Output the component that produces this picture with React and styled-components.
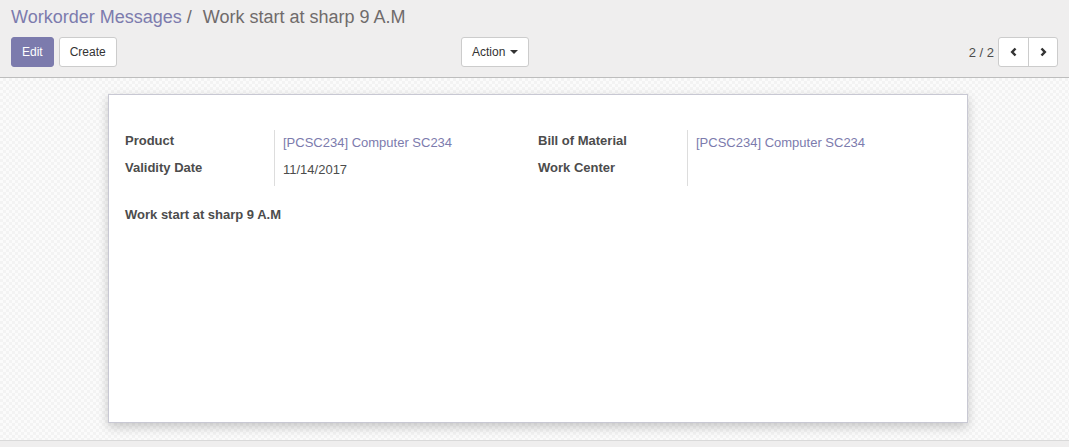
import React from "react";
import styled, { createGlobalStyle } from "styled-components";

const Global = createGlobalStyle`
  html, body { margin: 0; padding: 0; }
  body {
    font-family: "Liberation Sans", Arial, sans-serif;
    font-size: 13px;
    color: #4c4c4c;
    background: #fff;
  }
`;

const Page = styled.div`
  width: 1069px;
  height: 447px;
  display: flex;
  flex-direction: column;
  overflow: hidden;
`;

const ControlPanel = styled.div`
  background: #efeeee;
  border-bottom: 1px solid #bdbdbd;
  padding: 7px 11px 10px 11px;
  height: 60px;
  display: flex;
  flex-direction: column;
  gap: 9px;
`;

const Breadcrumb = styled.div`
  font-size: 18px;
  line-height: 21px;
  display: flex;
  align-items: center;
  white-space: nowrap;
`;

const Crumb = styled.span`
  color: #7c7bad;
`;

const Sep = styled.span`
  color: #6f6b6b;
  padding: 0 11px 0 5px;
`;

const Active = styled.span`
  color: #6f6b6b;
`;

const ButtonRow = styled.div`
  display: grid;
  grid-template-columns: 450px auto 1fr;
  align-items: center;
`;

const Left = styled.div`
  display: flex;
  gap: 5px;
`;

const Right = styled.div`
  display: flex;
  justify-content: flex-end;
  align-items: center;
  gap: 4px;
`;

const Btn = styled.button`
  height: 30px;
  padding: 0 10px;
  font-family: "Liberation Sans", Arial, sans-serif;
  font-size: 12px;
  border-radius: 3px;
  cursor: pointer;
  border: 1px solid ${(p) => (p.$primary ? "#7c7bad" : "#ccc")};
  background: ${(p) => (p.$primary ? "#7c7bad" : "#fff")};
  color: ${(p) => (p.$primary ? "#fff" : "#333")};
  display: inline-flex;
  align-items: center;
  gap: 5px;
`;

const Caret = styled.span`
  display: inline-block;
  width: 0;
  height: 0;
  border-left: 4px solid transparent;
  border-right: 4px solid transparent;
  border-top: 4px solid #333;
`;

const PagerText = styled.span`
  font-size: 13px;
  color: #4c4c4c;
`;

const PagerGroup = styled.div`
  display: flex;
  border: 1px solid #ccc;
  border-radius: 3px;
  background: #fff;
  height: 30px;
  box-sizing: border-box;
`;

const PagerBtn = styled.button`
  width: 29px;
  border: none;
  background: transparent;
  padding: 0;
  display: flex;
  align-items: center;
  justify-content: center;
  cursor: pointer;
  & + & {
    border-left: 1px solid #ccc;
  }
`;

const FormArea = styled.div`
  flex: 1;
  background-color: #fbfbfb;
  background-image: repeating-conic-gradient(#f3f3f3 0% 25%, #fbfbfb 0% 50%);
  background-size: 6px 6px;
  padding: 16px 101px 17px 108px;
  display: flex;
  flex-direction: column;
`;

const Sheet = styled.div`
  background: #fff;
  border: 1px solid #c8c8d3;
  box-shadow: 0 4px 10px rgba(0, 0, 0, 0.2);
  height: 329px;
  box-sizing: border-box;
  padding: 35px 16px 16px 16px;
`;

const Groups = styled.div`
  display: grid;
  grid-template-columns: 413px 413px;
`;

const Group = styled.div`
  display: grid;
  grid-template-columns: 150px 1fr;
  grid-auto-rows: 28px;
`;

const Label = styled.div`
  font-weight: bold;
  color: #4c4c4c;
  border-right: 1px solid #ddd;
  padding-top: ${(p) => (p.$first ? "3px" : "2px")};
  height: 100%;
  box-sizing: border-box;
`;

const Value = styled.div`
  padding-left: 8px;
  padding-top: ${(p) => (p.$first ? "5px" : "4px")};
  color: ${(p) => (p.$link ? "#7c7bad" : "#4c4c4c")};
`;

const Note = styled.div`
  margin-top: 21px;
  font-weight: bold;
  color: #4c4c4c;
`;

const Footer = styled.div`
  height: 6px;
  background: #efeeee;
  border-top: 1px solid #d9d9d9;
`;

const Chevron = ({ dir }) => (
  <svg width="10" height="10" viewBox="0 0 10 10">
    <path
      d={dir === "left" ? "M6.5 1.5 L3.2 5 L6.5 8.5" : "M3.5 1.5 L6.8 5 L3.5 8.5"}
      fill="none"
      stroke="#333"
      strokeWidth="2.5"
    />
  </svg>
);

export default function App() {
  return (
    <Page>
      <Global />
      <ControlPanel>
        <Breadcrumb>
          <Crumb>Workorder Messages</Crumb>
          <Sep>/</Sep>
          <Active>Work start at sharp 9 A.M</Active>
        </Breadcrumb>
        <ButtonRow>
          <Left>
            <Btn $primary>Edit</Btn>
            <Btn>Create</Btn>
          </Left>
          <Btn>
            Action <Caret />
          </Btn>
          <Right>
            <PagerText>2 / 2</PagerText>
            <PagerGroup>
              <PagerBtn><Chevron dir="left" /></PagerBtn>
              <PagerBtn><Chevron dir="right" /></PagerBtn>
            </PagerGroup>
          </Right>
        </ButtonRow>
      </ControlPanel>
      <FormArea>
        <Sheet>
          <Groups>
            <Group>
              <Label $first>Product</Label>
              <Value $first $link>[PCSC234] Computer SC234</Value>
              <Label>Validity Date</Label>
              <Value>11/14/2017</Value>
            </Group>
            <Group>
              <Label $first>Bill of Material</Label>
              <Value $first $link>[PCSC234] Computer SC234</Value>
              <Label>Work Center</Label>
              <Value></Value>
            </Group>
          </Groups>
          <Note>Work start at sharp 9 A.M</Note>
        </Sheet>
      </FormArea>
      <Footer />
    </Page>
  );
}
